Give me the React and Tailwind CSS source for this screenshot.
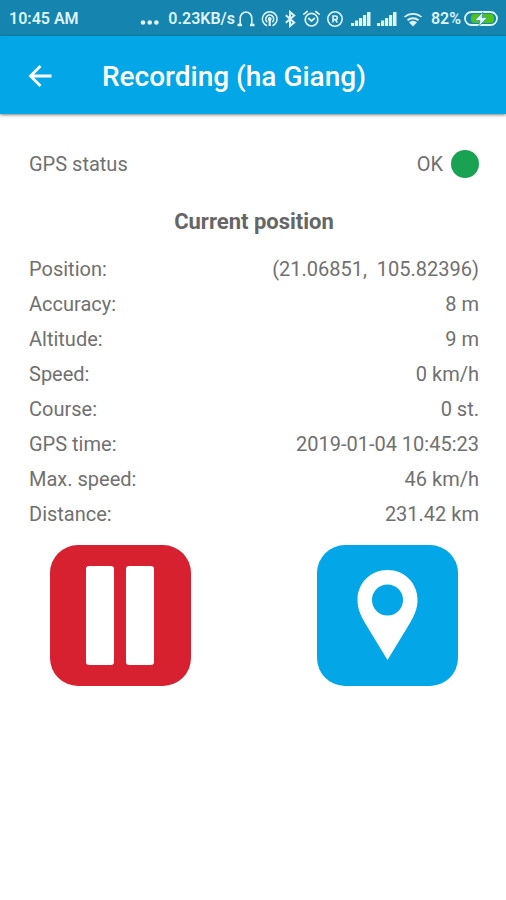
const readings = [
  ['Position:', '(21.06851,  105.82396)'],
  ['Accuracy:', '8 m'],
  ['Altitude:', '9 m'],
  ['Speed:', '0 km/h'],
  ['Course:', '0 st.'],
  ['GPS time:', '2019-01-04 10:45:23'],
  ['Max. speed:', '46 km/h'],
  ['Distance:', '231.42 km'],
];

function Signal() {
  return (
    <svg width="20" height="18" viewBox="0 0 20 18" fill="currentColor" aria-hidden="true">
      <rect x="0" y="13" width="3.200" height="3" />
      <rect x="4" y="10.500" width="3.200" height="5.500" />
      <rect x="8" y="8" width="3.200" height="8" />
      <rect x="12" y="5" width="3.200" height="11" />
      <rect x="16" y="2" width="3.500" height="14" />
    </svg>
  );
}

function StatusIcons() {
  return (
    <div className="flex items-center gap-[6px]">
      <svg width="18" height="18" viewBox="0 0 18 18" fill="none" stroke="currentColor" strokeWidth="1.6" aria-hidden="true">
        <path d="M3.200 15V8.500a5.800 6.500 0 0 1 11.600 0V15" />
        <path d="M0.500 15h4.500M13 15h4.500" strokeWidth="2.400" />
      </svg>
      <svg width="18" height="18" viewBox="0 0 18 18" fill="none" stroke="currentColor" strokeWidth="1.5" aria-hidden="true">
        <path d="M6 15.700a7.300 7.300 0 1 1 5.500 0" />
        <path d="M6.200 12.200a4 4 0 1 1 5.100 0" />
        <circle cx="8.700" cy="9" r="1.200" fill="currentColor" />
        <path d="M8.700 10v6" strokeWidth="2.200" />
      </svg>
      <svg width="12" height="18" viewBox="0 0 12 18" fill="none" stroke="currentColor" strokeWidth="2" aria-hidden="true">
        <path d="M0.800 5.200l8.400 7.300-4.200 3.500V2l4.200 3.500-8.400 7.300" />
      </svg>
      <svg width="18" height="18" viewBox="0 0 18 18" fill="none" stroke="currentColor" strokeWidth="1.7" strokeLinecap="round" aria-hidden="true">
        <circle cx="8.500" cy="9.700" r="6.300" />
        <path d="M0.900 4.200l3.300-2.700M16.100 4.200l-3.300-2.700M5.700 8.500L8.500 11l2.800-2.500" />
      </svg>
      <svg width="18" height="18" viewBox="0 0 18 18" fill="none" stroke="currentColor" strokeWidth="1.6" aria-hidden="true">
        <circle cx="8" cy="9" r="7.200" />
        <path d="M6 12.500V6h2.500a1.800 1.800 0 0 1 0 3.600H6M8.300 9.600l2 2.900" />
      </svg>
      <Signal />
      <Signal />
      <svg width="20" height="18" viewBox="0 0 20 18" fill="none" stroke="currentColor" strokeWidth="2" aria-hidden="true">
        <path d="M1.500 7a13 13 0 0 1 17 0" strokeWidth="1.600" />
        <path d="M4.500 10.200a8.500 8.500 0 0 1 11 0" />
        <path d="M10 16.500l-4-4.300a6 6 0 0 1 8 0z" fill="currentColor" stroke="none" />
      </svg>
    </div>
  );
}

export default function App() {
  return (
    <div className="min-h-screen bg-white font-[Roboto,sans-serif] text-[#707070]">
      <div className="flex h-9 items-center justify-between bg-[#1584ae] pt-[2px] pl-[9px] pr-2 text-base font-semibold text-[#dff3fb]">
        <span>10:45 AM</span>
        <div className="flex items-center">
          <svg width="20" height="18" viewBox="0 0 20 18" fill="currentColor" className="mr-2" aria-hidden="true">
            <circle cx="3" cy="12.500" r="2.300" />
            <circle cx="9.700" cy="12.500" r="2.300" />
            <circle cx="16.400" cy="12.500" r="2.300" />
          </svg>
          <span className="mr-[2px]">0.23KB/s</span>
          <StatusIcons />
          <span className="ml-2 mr-[3px]">82%</span>
          <svg width="34" height="18" viewBox="0 0 34 18" aria-hidden="true">
            <rect x="1" y="2" width="32" height="13" rx="6.500" fill="none" stroke="currentColor" strokeWidth="1.800" />
            <rect x="7" y="4" width="23" height="9" rx="3.500" fill="#4fc414" />
            <path d="M19 2l-8.500 8.500h5.500l-1.500 6 9-9h-5.500z" fill="currentColor" stroke="#1584ae" strokeWidth="0.600" />
          </svg>
        </div>
      </div>

      <header className="flex h-[78px] items-center gap-[50px] bg-[#03a6e6] pt-[3px] pl-7 text-white shadow-[0_1px_3px_rgba(0,0,0,0.5)]">
        <button type="button" aria-label="Back">
          <svg width="24" height="24" viewBox="0 0 24 24" fill="none" stroke="currentColor" strokeWidth="2.800" className="block" aria-hidden="true">
            <path d="M12.500 1L2.500 11l10 10M2.500 11H23.500" />
          </svg>
        </button>
        <h1 className="text-[28px] font-medium">Recording (ha Giang)</h1>
      </header>

      <main className="pt-[34px] pr-[27px] pl-[29px] text-xl">
        <div className="flex h-8 items-center justify-between">
          <span>GPS status</span>
          <span className="flex items-center gap-2">
            OK
            <span className="size-7 rounded-full bg-[#18a252]" />
          </span>
        </div>

        <h2 className="mt-[26px] text-center text-[22px] leading-8 font-bold text-[#666666]">Current position</h2>

        <dl className="mt-[13px]">
          {readings.map(([label, value]) => (
            <div key={label} className="flex h-[35px] items-center justify-between">
              <dt>{label}</dt>
              <dd className="whitespace-pre">{value}</dd>
            </div>
          ))}
        </dl>

        <div className="mt-[14px] flex justify-between px-[21px]">
          <button type="button" aria-label="Pause recording" className="size-[141px] rounded-[28px] bg-[#d72030]">
            <svg viewBox="0 0 141 141" fill="#ffffff" className="block" aria-hidden="true">
              <rect x="36" y="21" width="28" height="99" rx="3" />
              <rect x="76" y="21" width="28" height="99" rx="3" />
            </svg>
          </button>
          <button type="button" aria-label="Add waypoint" className="size-[141px] rounded-[28px] bg-[#03a6e6]">
            <svg viewBox="0 0 141 141" fill="#ffffff" className="block" aria-hidden="true">
              <path fillRule="evenodd" d="M70.500 25C53.500 25 40.500 38 40.500 55C40.500 64 44 71 48 78L70.500 115L93 78C97 71 100.500 64 100.500 55C100.500 38 87.500 25 70.500 25ZM70.500 39.500a15.500 15.500 0 1 1 0 31a15.500 15.500 0 1 1 0-31Z" />
            </svg>
          </button>
        </div>
      </main>
    </div>
  );
}
